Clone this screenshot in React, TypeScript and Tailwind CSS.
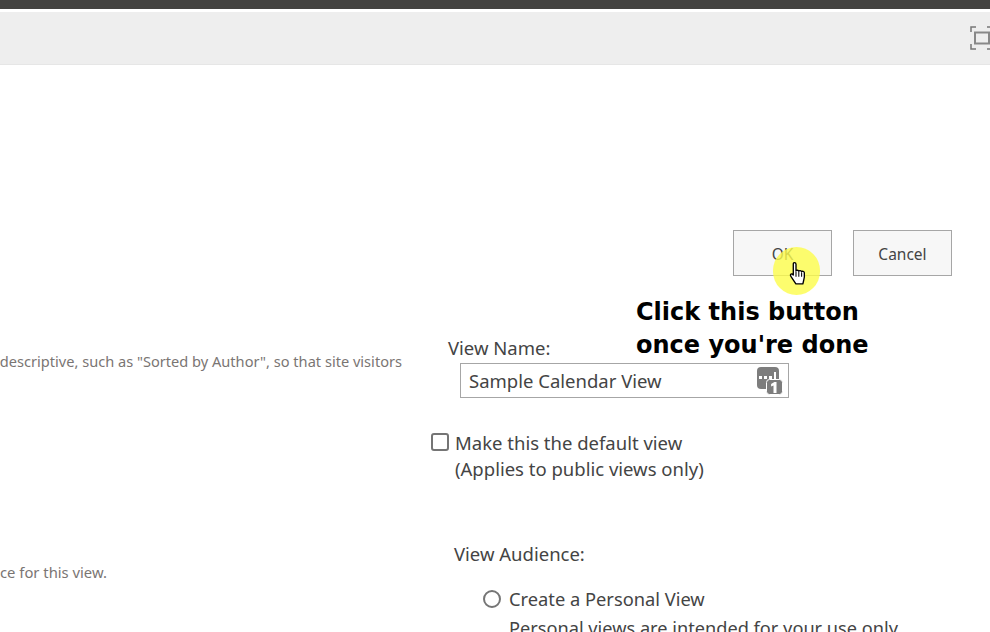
import React from 'react';

const uiFont = "font-['Noto_Sans','Open_Sans',sans-serif]";

// fullscreen/focus icon at the right end of the command bar
const FocusIcon = () => (
  <svg width="22" height="24" viewBox="0 0 22 24" fill="none" className="shrink-0">
    <path d="M1 6V1h5M1 18v5h5M21 1h-4M21 23h-4" stroke="#777" strokeWidth="1.5" />
    <rect x="5" y="6.5" width="14" height="11" stroke="#888" strokeWidth="2" />
  </svg>
);

// password-manager style badge in the input
const BadgeIcon = () => (
  <svg width="26" height="28" viewBox="0 0 26 28" className="shrink-0">
    <rect x="0" y="0" width="22" height="22" rx="4" fill="#7d7d7d" />
    <rect x="2" y="9" width="3" height="3" fill="#fff" />
    <rect x="7" y="9" width="3" height="3" fill="#fff" />
    <rect x="12" y="9" width="3" height="3" fill="#fff" />
    <rect x="17" y="5" width="2" height="8" fill="#fff" />
    <rect x="9.500" y="12.500" width="16" height="15" rx="3" fill="#7d7d7d" stroke="#fff" strokeWidth="1" />
    <path d="M19.5 15v11h-3v-7.500l-2.400 1v-2.400l3.300-2.100z" fill="#fff" />
  </svg>
);

const HandCursor = () => (
  <svg width="19" height="25" viewBox="0 0 18 24">
    <path
      d="M5 1.500c1 0 1.600.7 1.600 1.700v6.300c.3-.9 2.400-.9 2.700.3.400-.9 2.400-.8 2.700.5.500-.7 2.500-.5 2.600 1 .2 2.700.2 5-.6 7.200l-.8 3.500H6.500L2.500 16c-1-1.300-1.500-2.500-1-3.200.6-.8 1.700-.3 2.500.7V3.200C4 2.200 4.200 1.500 5 1.500z"
      fill="#fff"
      stroke="#000"
      strokeWidth="1.300"
      strokeLinejoin="round"
    />
    <path d="M6.600 10v5M9.300 10v5M12 11v4" stroke="#000" strokeWidth="1" />
  </svg>
);

export default function App() {
  return (
    <div className={`relative h-[632px] w-[990px] overflow-hidden bg-white ${uiFont}`}>
      <div className="h-[9px] bg-[#444341]" />
      <div className="mt-[3px] flex h-[53px] items-center justify-end overflow-hidden border-b border-[#e6e6e6] bg-[#eeeeee]">
        <div className="-mr-[2px] flex">
          <FocusIcon />
        </div>
      </div>

      <div className="mt-[165px] flex justify-end gap-[21px] pr-[38px]">
        <button className="h-[46px] w-[99px] border border-[#a6a6a6] bg-[#f7f7f7] pt-[3px] text-[15.500px] text-[#444]">OK</button>
        <button className="h-[46px] w-[99px] border border-[#a6a6a6] bg-[#f7f7f7] pt-[3px] text-[15.500px] text-[#444]">Cancel</button>
      </div>

      {/* View name section */}
      <div className="mt-[60px] flex">
        <div className="flex w-[402px] justify-end overflow-hidden whitespace-nowrap pt-[13px] text-[14.600px] leading-[24px] text-[#7a7573]">
          descriptive, such as "Sorted by Author", so that site visitors
        </div>
        <div className="ml-[29px] flex-1 text-[#444]">
          <div className="pl-[17px] text-[18.500px] leading-[23px]">View Name:</div>
          <div className="ml-[29px] mt-[4px] flex h-[35px] w-[329px] items-center justify-between border border-[#a6a6a6] pl-2 pr-[5px] text-[18.500px]">
            <span>Sample Calendar View</span>
            <BadgeIcon />
          </div>
          <div className="mt-[32px] flex">
            <span className="mt-[3px] h-[18px] w-[18px] shrink-0 rounded-[3px] border-2 border-[#757575]" />
            <div className="ml-[6px] text-[18.500px] leading-[26px]">
              <div>Make this the default view</div>
              <div>(Applies to public views only)</div>
            </div>
          </div>
        </div>
      </div>

      {/* Audience section */}
      <div className="mt-[59px] flex">
        <div className="w-[402px] overflow-hidden whitespace-nowrap pt-[19px] text-[14.800px] leading-[24px] text-[#7a7573]">
          ce for this view.
        </div>
        <div className="ml-[52px] flex-1 text-[18.500px] text-[#444]">
          <div className="leading-[26px]">View Audience:</div>
          <div className="ml-[29px] mt-[19px] flex items-center">
            <span className="h-[18px] w-[18px] shrink-0 rounded-full border-2 border-[#757575]" />
            <span className="ml-2 text-[18.300px] leading-[26px]">Create a Personal View</span>
          </div>
          <div className="ml-[55px] mt-[3px] whitespace-nowrap text-[18.200px] leading-[26px]">Personal views are intended for your use only.</div>
        </div>
      </div>

      {/* Tutorial annotation */}
      <div className="absolute left-[636px] top-[296px] font-['DejaVu_Sans',sans-serif] text-[24px] font-bold leading-[33px] text-black">
        Click this button
        <br />
        once you're done
      </div>
      <div className="absolute left-[773px] top-[247px] h-[48px] w-[47px] rounded-full bg-[#fdfd4a]/80" />
      <div className="absolute left-[789px] top-[261px]">
        <HandCursor />
      </div>
    </div>
  );
}
